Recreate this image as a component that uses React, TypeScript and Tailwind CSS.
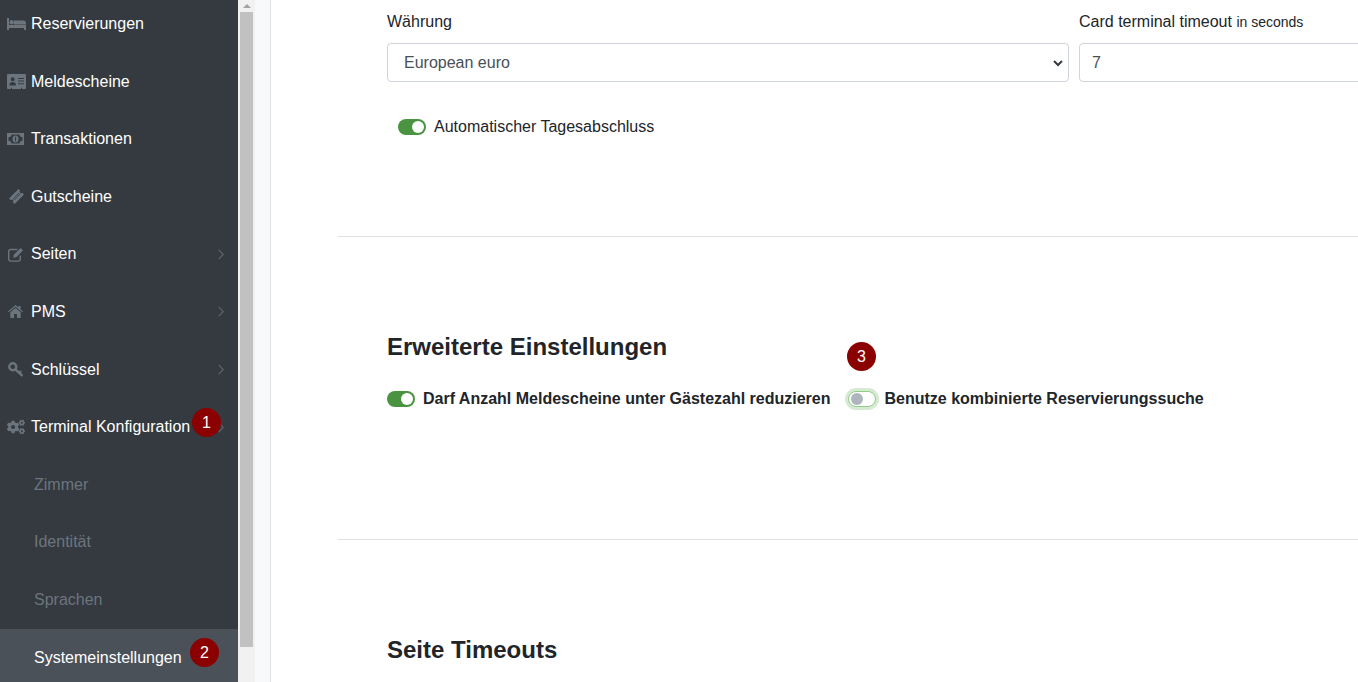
import type { ReactNode } from 'react';
import { FaCogs } from 'react-icons/fa';

const font = "font-['Liberation_Sans',Arial,sans-serif]";

function BedIcon() {
    return (
        <svg className="h-[12px] w-[19px]" viewBox="0 0 19 12" fill="currentColor">
            <path d="M0 0h2v7h17v5h-2v-2H2v2H0z" />
            <circle cx="4.6" cy="4.2" r="2.2" />
            <path d="M7 2.4h9.4c1.5 0 2.6 1.1 2.6 2.6v1.6H7z" />
        </svg>
    );
}

function IdCardIcon() {
    return (
        <svg className="h-[15px] w-[19px]" viewBox="0 0 19 15" fill="currentColor">
            <path fillRule="evenodd" d="M1 0h17a1 1 0 0 1 1 1v13a1 1 0 0 1-1 1h-3v-1.2h-1V15H5v-1.2H4V15H1a1 1 0 0 1-1-1V1a1 1 0 0 1 1-1zM5.700 3.200a2 2 0 1 0 0 4 2 2 0 0 0 0-4zM2.400 11.400h6.600c0-2.200-1-3.400-3.300-3.400s-3.300 1.200-3.300 3.400zM11 4v1h6V4zM11 6.600v1h6v-1zM11 9.200v1h6v-1z" />
        </svg>
    );
}

function MoneyIcon() {
    return (
        <svg className="h-[12px] w-[17px]" viewBox="0 0 17 12" fill="currentColor">
            <path fillRule="evenodd" d="M0 0h17v12H0zM4.500 1.500c0 1.500-1.200 2.700-3 2.700v3.600c1.800 0 3 1.200 3 2.700h8c0-1.500 1.200-2.700 3-2.700V4.200c-1.800 0-3-1.200-3-2.700z" />
            <ellipse cx="8.500" cy="6" rx="3" ry="3.500" />
            <path fill="#343a40" d="M8 3.800h1.100v4.400H8z" />
        </svg>
    );
}

function TicketIcon() {
    return (
        <svg className="ml-[2px] h-[15px] w-[15px]" viewBox="0 0 15 15" fill="currentColor">
            <path fillRule="evenodd" d="M9.500 0l1.600 1.600a1.500 1.500 0 0 0 2.200 2.200L15 5.500 5.500 15l-1.600-1.600a1.500 1.500 0 0 0-2.300-2.300L0 9.500zM9.500 4L4 9.500l1.500 1.500L11 5.500z" />
            <path d="M9.300 5l.7.700-4.500 4.500-.7-.7z" />
        </svg>
    );
}

function EditIcon() {
    return (
        <svg className="ml-[1px] h-[15px] w-[16px]" viewBox="0 0 16 15" fill="none" stroke="currentColor">
            <path strokeWidth="1.400" d="M12.300 8.500v3.600a2 2 0 0 1-2 2H2.700a2 2 0 0 1-2-2V4.500a2 2 0 0 1 2-2h6.600" />
            <path fill="currentColor" stroke="none" d="M12.600 1l2.400 2.400-6.800 6.800-3 .6.600-3z" />
        </svg>
    );
}

function HomeIcon() {
    return (
        <svg className="ml-[1px] h-[13px] w-[15px]" viewBox="0 0 15 13" fill="currentColor">
            <path d="M7.500 0l3 2.600V1h2v3.300L15 6.500l-.8.8-6.700-5.600-6.700 5.600L0 6.500z" />
            <path d="M7.500 3l5.200 4.300V13H9V9H6v4H2.300V7.300z" />
        </svg>
    );
}

function KeyIcon() {
    return (
        <svg className="ml-[1px] h-[15px] w-[16px]" viewBox="0 0 16 15" fill="none" stroke="currentColor" strokeWidth="2.400">
            <circle cx="4.800" cy="4.800" r="3.500" />
            <path d="M7.500 7.500l7 6.300M11.300 11l1.800-1.900" />
        </svg>
    );
}

function Chevron() {
    return (
        <svg className="ml-auto h-[11px] w-[6px]" viewBox="0 0 6 11" fill="none" stroke="#5f666d" strokeWidth="1.100">
            <path d="M.8.8l4.400 4.700-4.400 4.700" />
        </svg>
    );
}

function Badge({ n, className }: { n: number; className: string }) {
    return (
        <span className={`absolute flex h-[29px] w-[29px] items-center justify-center rounded-full bg-[#8b0000] text-[16px] text-white ${className}`}>
            {n}
        </span>
    );
}

function NavItem({ icon, label, arrow }: { icon: ReactNode; label: string; arrow?: boolean }) {
    return (
        <div className="flex h-[57.6px] items-center pl-[7px] pr-[14px] text-[16px] text-white">
            <span className="flex w-[24px] shrink-0 items-center text-[#6c757d]">{icon}</span>
            <span className="whitespace-nowrap">{label}</span>
            {arrow && <Chevron />}
        </div>
    );
}

function SubItem({ label, active }: { label: string; active?: boolean }) {
    return (
        <div className={`flex h-[57.6px] items-center pl-[34px] text-[16px] ${active ? 'bg-[#4b5159] text-white' : 'text-[#6c757d]'}`}>
            {label}
        </div>
    );
}

function Toggle({ on }: { on?: boolean }) {
    return (
        <span
            className={`flex h-[16px] w-[28px] shrink-0 items-center rounded-full px-[2px] ${on ? 'justify-end bg-[#4a9340]' : 'border border-[#8fce85] bg-white shadow-[0_0_0_3px_#d6e9d2]'}`}
        >
            <span className={`block h-[12px] w-[12px] rounded-full ${on ? 'bg-white' : 'bg-[#adb5bd]'}`} />
        </span>
    );
}

export default function App() {
    return (
        <div className={`flex h-[682px] w-[1358px] overflow-hidden bg-white text-[#212529] ${font}`}>
            <aside className="relative -mt-[4.8px] h-[692px] w-[238px] shrink-0 overflow-hidden bg-[#343a40]">
                <NavItem icon={<BedIcon />} label="Reservierungen" />
                <NavItem icon={<IdCardIcon />} label="Meldescheine" />
                <NavItem icon={<MoneyIcon />} label="Transaktionen" />
                <NavItem icon={<TicketIcon />} label="Gutscheine" />
                <NavItem icon={<EditIcon />} label="Seiten" arrow />
                <NavItem icon={<HomeIcon />} label="PMS" arrow />
                <NavItem icon={<KeyIcon />} label="Schlüssel" arrow />
                <NavItem icon={<FaCogs className="text-[18px]" />} label="Terminal Konfiguration" arrow />
                <SubItem label="Zimmer" />
                <SubItem label="Identität" />
                <SubItem label="Sprachen" />
                <SubItem label="Systemeinstellungen" active />
                <Badge n={1} className="left-[192px] top-[412.8px]" />
                <Badge n={2} className="left-[190px] top-[642.8px]" />
            </aside>

            <div className="relative h-full w-[17px] shrink-0 bg-[#f1f1f1]">
                <div className="flex h-[12px] items-center justify-center">
                    <span className="h-0 w-0 border-x-[4px] border-b-[4px] border-x-transparent border-b-[#a3a3a3]" />
                </div>
                <div className="mx-auto h-[635px] w-[13px] bg-[#c1c1c1]" />
            </div>

            <div className="h-full w-[15px] shrink-0 bg-[#f8f9fa]" />

            <main className="relative min-w-0 flex-1 border-l border-[#dee2e6] pl-[67px] text-[16px]">
                <div className="w-[1100px] pl-[49px]">
                    <div className="flex gap-[10px] pt-[10px]">
                        <div className="w-[682px] shrink-0">
                            <div className="mb-[9px] leading-[24px]">Währung</div>
                            <div className="relative flex h-[39px] items-center rounded border border-[#ced4da] bg-white pl-[16px] text-[#495057]">
                                European euro
                                <svg className="absolute right-[5px] top-[15px] h-[8px] w-[10px]" viewBox="0 0 10 8" fill="none" stroke="#343a40" strokeWidth="2">
                                    <path d="M1 2l4 4 4-4" />
                                </svg>
                            </div>
                        </div>
                        <div className="w-[400px] shrink-0">
                            <div className="mb-[9px] leading-[24px]">
                                Card terminal timeout <span className="text-[14px]">in seconds</span>
                            </div>
                            <div className="flex h-[39px] items-center rounded border border-[#ced4da] bg-white pl-[12px] text-[#495057]">7</div>
                        </div>
                    </div>
                    <div className="mt-[33px] flex items-center gap-[8px] pl-[11px] leading-[24px]">
                        <Toggle on />
                        <span>Automatischer Tagesabschluss</span>
                    </div>
                </div>

                <hr className="mt-[97px] border-[#dee2e6]" />

                <div className="pl-[49px]">
                    <h2 className="mt-[92px] text-[24px] font-bold leading-[36px]">Erweiterte Einstellungen</h2>
                    <div className="mt-[22px] flex items-center font-bold leading-[24px]">
                        <Toggle on />
                        <span className="ml-[8px]">Darf Anzahl Meldescheine unter Gästezahl reduzieren</span>
                        <span className="ml-[17px]"><Toggle /></span>
                        <span className="ml-[9px]">Benutze kombinierte Reservierungssuche</span>
                    </div>
                </div>

                <hr className="mt-[128px] border-[#dee2e6]" />

                <div className="pl-[49px]">
                    <h2 className="mt-[92px] text-[24px] font-bold leading-[36px]">Seite Timeouts</h2>
                </div>

                <Badge n={3} className="left-[576px] top-[342px]" />
            </main>
        </div>
    );
}
